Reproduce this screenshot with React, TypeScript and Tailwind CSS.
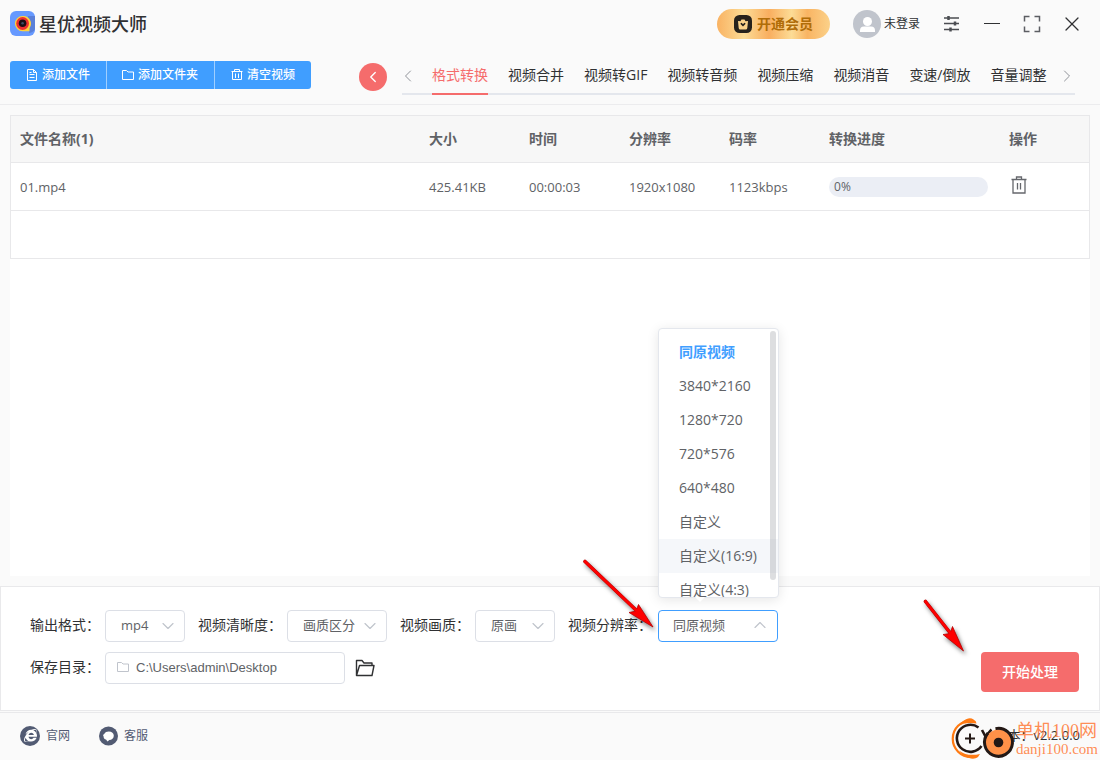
import React, { useState } from 'react';
import { ChevronDown, ChevronLeft, ChevronRight, ChevronUp, X } from 'lucide-react';
import { FaInternetExplorer } from 'react-icons/fa';

type VideoFile = {
  name: string;
  size: string;
  duration: string;
  resolution: string;
  bitrate: string;
  progress: number;
};

const TABS = ['格式转换', '视频合并', '视频转GIF', '视频转音频', '视频压缩', '视频消音', '变速/倒放', '音量调整'];

const RESOLUTIONS = ['同原视频', '3840*2160', '1280*720', '720*576', '640*480', '自定义', '自定义(16:9)', '自定义(4:3)'];

const FILES: VideoFile[] = [
  { name: '01.mp4', size: '425.41KB', duration: '00:00:03', resolution: '1920x1080', bitrate: '1123kbps', progress: 0 },
];

const AppLogo = () => (
  <svg width="25" height="25" viewBox="0 0 25 25" aria-hidden="true">
    <rect width="25" height="25" rx="6" fill="#6699ff" />
    <path d="M18 5h7v13q-1 3-6 4z" fill="#5a80d8" />
    <path d="M12.500 5a7.600 7.600 0 1 0 0 15.200h7V17A7.600 7.600 0 0 0 12.500 5z" fill="#ffd23c" />
    <circle cx="12.600" cy="12.500" r="6.400" fill="#ee2f2f" />
    <circle cx="12.600" cy="12.300" r="3.800" fill="#1c0d14" />
    <circle cx="12.600" cy="12.300" r="1.300" fill="#3c4d66" />
  </svg>
);

const VipIcon = () => (
  <svg width="18" height="18" viewBox="0 0 18 18" aria-hidden="true">
    <rect width="18" height="18" rx="5.500" fill="#26221c" />
    <path d="M4 6l2.500.3L7.500 4.500h3l1 1.800L14 6l-.7 7q-.1 1.500-1.500 1.500H6.200q-1.400 0-1.500-1.500z" fill="#fbd38a" />
    <path d="M7.300 8.700L9 10.300l1.700-1.600" fill="none" stroke="#26221c" strokeWidth="1.600" strokeLinecap="round" />
  </svg>
);

const Avatar = () => (
  <svg width="28" height="28" viewBox="0 0 28 28" aria-hidden="true">
    <circle cx="14" cy="14" r="14" fill="#c0c4cc" />
    <circle cx="14.500" cy="11.500" r="4.500" fill="#fff" />
    <path d="M7 22v-1.500a4 4 0 0 1 4-4h7a4 4 0 0 1 4 4v1.500z" fill="#fff" />
  </svg>
);

const SlidersIcon = () => (
  <svg width="18" height="18" viewBox="0 0 18 18" fill="none" stroke="#4b4d52" strokeWidth="1.500" aria-hidden="true">
    <path d="M1 3h15M1 8.500h15M1 14.500h15" />
    <path d="M5.500 1v4M12 6.500v4M7.500 12.500v4" strokeWidth="2.500" />
  </svg>
);

const FullscreenIcon = () => (
  <svg width="18" height="18" viewBox="0 0 18 18" fill="none" stroke="#5c5e63" strokeWidth="1.500" aria-hidden="true">
    <path d="M1.500 6.500v-5h5M11.500 1.500h5v5M16.500 11.500v5h-5M6.500 16.500h-5v-5" />
  </svg>
);

const DocIcon = () => (
  <svg width="12" height="12" viewBox="0 0 12 12" fill="none" stroke="currentColor" aria-hidden="true">
    <path d="M1.500.5h6l3 3v8h-9zM7.500.5v3h3M3.500 5.500h5M3.500 8.500h5M3.500 3.500h2" />
  </svg>
);

const FolderIcon = () => (
  <svg width="12" height="12" viewBox="0 0 12 12" fill="none" stroke="currentColor" aria-hidden="true">
    <path d="M.5 10.500v-9h4l1.500 1.500h5.500v7.500z" />
  </svg>
);

const ClearIcon = () => (
  <svg width="12" height="12" viewBox="0 0 12 12" fill="none" stroke="currentColor" aria-hidden="true">
    <path d="M.5 2.500h11M3.500 2.500v-2h5v2M1.500 2.500v8h9v-8M4.500 4.500v4.500M7.500 4.500v4.500" />
  </svg>
);

const TrashIcon = () => (
  <svg width="18" height="18" viewBox="0 0 18 18" fill="none" stroke="#65676c" strokeWidth="1.300" aria-hidden="true">
    <path d="M1.500 3.500h15M6.500 3.500V1h5v2.500M3 3.500v13.500h12V3.500M7.500 7v6.500M10.500 7v6.500" />
  </svg>
);

const OpenFolderIcon = () => (
  <svg width="20" height="18" viewBox="0 0 20 18" fill="none" stroke="#303133" strokeWidth="1.400" strokeLinejoin="round" aria-hidden="true">
    <path d="M1.500 16.500V1.500h5.500l2 2.500h8v2.500M1.500 16.500l3-10h14.500l-2 10z" />
  </svg>
);

const ChatIcon = () => (
  <svg width="20" height="20" viewBox="0 0 20 20" aria-hidden="true">
    <circle cx="10.500" cy="10" r="9.500" fill="#525b73" />
    <path d="M10.800 5.500c3 0 5 1.700 5 4.200s-2 4.200-4.500 4.300L9.500 15.500 8 13.500C6.500 13.500 5.500 12 5.600 10.500L5 9l1.200-1C7 6.300 8.700 5.500 10.800 5.500z" fill="#fff" />
  </svg>
);

const WatermarkLogo = () => (
  <svg width="65" height="44" viewBox="0 0 65 44" fill="none" aria-hidden="true">
    <path d="M20 3.500A18 18 0 0 0 20 40" stroke="#ff7a12" strokeWidth="2.200" />
    <path d="M7 9.500C11 3.500 18-1 22.500 2.500q3 1.500 3 4C19 5.500 12 5.500 7 9.500zM8 33.500c5 7 14 10.500 19 6.500l2-3C22 38.500 14 38.500 8 33.500z" fill="#ff7a12" />
    <path d="M27.500 10.500A13.500 13.500 0 1 0 30.500 29" stroke="#231815" strokeWidth="2.600" />
    <path d="M31 13l4.500 8.500M40.500 12.500q-4 3.500-6 9.500" stroke="#231815" strokeWidth="2.600" />
    <path d="M14 21.500h10M19 16.500v10" stroke="#231815" strokeWidth="2" />
    <circle cx="47.500" cy="25.500" r="13" fill="#ff9148" />
    <path d="M44.500 11.600A14 14 0 1 1 37 16" stroke="#231815" strokeWidth="3" />
    <circle cx="47.500" cy="25.500" r="4.800" fill="#231815" />
  </svg>
);

const ArrowLong = () => (
  <svg width="84" height="84" viewBox="0 0 84 84" className="pointer-events-none absolute -left-[81px] -top-[58px] z-20 drop-shadow-[2px_3px_2px_rgba(0,0,0,0.5)]" aria-hidden="true">
    <path d="M8 9.500L60 59" stroke="#b40000" strokeWidth="3.600" strokeLinecap="round" />
    <path d="M76 75L52 60.500l7-1.500 2.500-6.500z" fill="#fe0000" stroke="#b40000" strokeWidth=".8" />
    <path d="M8 9.500L61 60" stroke="#fe0000" strokeWidth="2.600" strokeLinecap="round" />
  </svg>
);

const ArrowShort = () => (
  <svg width="60" height="70" viewBox="0 0 60 70" className="pointer-events-none absolute -left-[64px] -top-[59px] drop-shadow-[2px_3px_2px_rgba(0,0,0,0.5)]" aria-hidden="true">
    <path d="M8.500 8.500L34 41" stroke="#b40000" strokeWidth="3.600" strokeLinecap="round" />
    <path d="M46.500 58L26 41.500l7-1 2.500-7z" fill="#fe0000" stroke="#b40000" strokeWidth=".8" />
    <path d="M8.500 8.500L35 42" stroke="#fe0000" strokeWidth="2.600" strokeLinecap="round" />
  </svg>
);

type SelectFieldProps = {
  id: string;
  label: string;
  options: string[];
  widthClass: string;
};

const SelectField: React.FC<SelectFieldProps> = ({ id, label, options, widthClass }) => (
  <div className="flex items-center gap-[5px]">
    <label htmlFor={id} className="pb-0.5 text-[#303133]">{label}</label>
    <div className={`relative ${widthClass}`}>
      <select id={id} className="h-8 w-full appearance-none rounded border border-[#dcdfe6] bg-white pb-0.5 pl-[15px] text-[13px] text-[#606266] outline-none">
        {options.map((o) => <option key={o}>{o}</option>)}
      </select>
      <ChevronDown size={20} strokeWidth={1.4} className="pointer-events-none absolute right-[7px] top-1.5 text-[#c0c4cc]" />
    </div>
  </div>
);

const ResolutionField = () => {
  const [open, setOpen] = useState(true);
  const [value, setValue] = useState(RESOLUTIONS[0]);
  const [hovered, setHovered] = useState('自定义(16:9)');

  return (
    <div className="flex items-center gap-1.5">
      <span id="resolution-label" className="pb-0.5 text-[#303133]">视频分辨率：</span>
      <div className="relative w-[120px]">
        <button
          type="button"
          role="combobox"
          aria-expanded={open}
          aria-controls="resolution-list"
          aria-labelledby="resolution-label"
          onClick={() => setOpen(!open)}
          className="flex h-8 w-full items-center justify-between rounded border border-[#409eff] bg-white pb-0.5 pl-3.5 pr-[7px] text-[13px] text-[#606266]"
        >
          {value}
          <ChevronUp size={20} strokeWidth={1.4} className="text-[#c0c4cc]" />
        </button>
        {open && (
          <div className="absolute bottom-full left-0 z-10 mb-3 w-[121px] rounded border border-[#e4e7ed] bg-white shadow-[0_2px_12px_rgba(0,0,0,0.1)]">
            <ul id="resolution-list" role="listbox" className="h-[268px] overflow-hidden pt-1.5">
              {RESOLUTIONS.map((r) => (
                <li
                  key={r}
                  role="option"
                  aria-selected={r === value}
                  onMouseEnter={() => setHovered(r)}
                  onClick={() => { setValue(r); setOpen(false); }}
                  className={`h-[34px] cursor-pointer whitespace-nowrap pl-5 leading-[34px] ${r === hovered ? 'bg-[#f5f7fa]' : ''} ${r === value ? 'font-bold text-[#409eff]' : 'text-[#606266]'}`}
                >
                  {r}
                </li>
              ))}
            </ul>
            <div className="absolute right-0.5 top-0.5 h-[249px] w-1.5 rounded-full bg-[#909399]/30" />
            <div className="absolute left-9 top-full h-0 w-0 border-x-[5px] border-t-[5px] border-x-transparent border-t-white" />
          </div>
        )}
        <ArrowLong />
      </div>
    </div>
  );
};

const Header = () => {
  const [active, setActive] = useState(TABS[0]);

  return (
    <header className="border-b border-[#ececee]">
      <div className="flex h-[47px] items-center justify-between pl-2.5 pr-5">
        <div className="flex items-center gap-1">
          <AppLogo />
          <h1 className="text-lg font-medium leading-6 text-[#303133]">星优视频大师</h1>
        </div>
        <div className="flex items-center gap-[23px]">
          <button type="button" className="flex h-[30px] items-center gap-[5px] rounded-full bg-[linear-gradient(90deg,#f9b262_0%,#fcdc96_24%,#f9ae5f_46%,#fcdc96_66%,#f9b463_80%,#fbd189_100%)] px-[17px] font-bold text-[#b06c08]">
            <VipIcon />
            开通会员
          </button>
          <button type="button" className="flex items-center gap-[3px] text-xs text-[#303133]">
            <Avatar />
            未登录
          </button>
          <button type="button" aria-label="设置"><SlidersIcon /></button>
          <button type="button" aria-label="最小化" className="flex h-4 w-4 items-center">
            <span className="h-px w-full bg-[#303133]" />
          </button>
          <button type="button" aria-label="最大化"><FullscreenIcon /></button>
          <button type="button" aria-label="关闭" className="flex w-4 justify-center">
            <X size={24} strokeWidth={1.3} className="shrink-0 text-[#303133]" />
          </button>
        </div>
      </div>

      <div className="flex items-center pb-[9px] pl-2.5 pr-[25px] pt-2">
        <div className="flex shrink-0 overflow-hidden rounded-[3px] bg-[#409eff] text-xs font-medium text-white">
          <button type="button" className="flex h-7 items-center gap-1 px-4"><DocIcon />添加文件</button>
          <button type="button" className="flex h-7 items-center gap-1 border-l border-[#a0cfff] px-4 pl-[15px]"><FolderIcon />添加文件夹</button>
          <button type="button" className="flex h-7 items-center gap-1 border-l border-[#a0cfff] px-4"><ClearIcon />清空视频</button>
        </div>
        <button type="button" aria-label="返回" className="ml-12 mt-1 flex h-7 w-7 shrink-0 items-center justify-center rounded-full bg-[#f56c6c] text-white">
          <ChevronLeft size={18} strokeWidth={1.8} />
        </button>
        <nav className="ml-[15px] flex h-10 min-w-0 flex-1 items-stretch border-b-2 border-[#e4e7ed]">
          <button type="button" aria-label="上一个" className="mt-1 w-[30px] shrink-0 text-[#909399]">
            <ChevronLeft size={20} strokeWidth={1.2} className="-ml-1" />
          </button>
          <div className="flex flex-1 gap-5">
            {TABS.map((t) => (
              <button
                key={t}
                type="button"
                onClick={() => setActive(t)}
                className={`-mb-0.5 shrink-0 whitespace-nowrap border-b-2 pt-0.5 ${t === active ? 'border-[#f56c6c] text-[#f56c6c]' : 'border-transparent text-[#303133]'}`}
              >
                {t}
              </button>
            ))}
          </div>
          <button type="button" aria-label="下一个" className="mt-1 flex w-4 shrink-0 items-center justify-center text-[#909399]">
            <ChevronRight size={20} strokeWidth={1.2} className="shrink-0" />
          </button>
        </nav>
      </div>
    </header>
  );
};

const FileTable = () => (
  <table className="w-full table-fixed border-separate border-spacing-0 border-x border-t border-[#e8e8ea] text-left text-[13px] text-[#606266] [&_td]:h-12 [&_td]:border-b [&_td]:border-[#e8e8ea] [&_td]:px-[9px] [&_td]:pt-px [&_td]:pb-0 [&_th]:h-[47px] [&_th]:border-b [&_th]:border-[#e8e8ea] [&_th]:px-[9px]">
    <thead className="bg-[#f7f7f7] text-sm">
      <tr>
        <th>文件名称(1)</th>
        <th className="w-[100px]">大小</th>
        <th className="w-[100px]">时间</th>
        <th className="w-[100px]">分辨率</th>
        <th className="w-[100px]">码率</th>
        <th className="w-[180px]">转换进度</th>
        <th className="w-[89px]">操作</th>
      </tr>
    </thead>
    <tbody>
      {FILES.map((f) => (
        <tr key={f.name}>
          <td>{f.name}</td>
          <td>{f.size}</td>
          <td>{f.duration}</td>
          <td>{f.resolution}</td>
          <td>{f.bitrate}</td>
          <td>
            <div role="progressbar" aria-valuenow={f.progress} className="relative h-5 w-[159px] overflow-hidden rounded-full bg-[#ebeef5]">
              <div className="absolute inset-y-0 left-0 bg-[#409eff]" style={{ width: `${f.progress}%` }} />
              <span className="relative block pl-[5px] text-xs leading-5">{f.progress}%</span>
            </div>
          </td>
          <td>
            <button type="button" aria-label="删除" className="mb-1 block pl-px"><TrashIcon /></button>
          </td>
        </tr>
      ))}
      <tr><td colSpan={7} /></tr>
    </tbody>
  </table>
);

const SettingsPanel = () => (
  <section className="mt-2.5 border border-[#e9e9eb] bg-white pb-[18px] pl-[29px] pr-5 pt-[23px]">
    <div className="flex items-center gap-[13px]">
      <SelectField id="format" label="输出格式：" options={['mp4']} widthClass="w-20" />
      <SelectField id="clarity" label="视频清晰度：" options={['画质区分']} widthClass="w-[100px]" />
      <SelectField id="quality" label="视频画质：" options={['原画']} widthClass="w-20" />
      <ResolutionField />
    </div>
    <div className="mt-2.5 flex items-start justify-between">
      <div className="flex items-center">
        <label htmlFor="save-dir" className="mr-[5px] pb-0.5 text-[#303133]">保存目录：</label>
        <div className="relative text-[#c0c4cc]">
          <input
            id="save-dir"
            type="text"
            defaultValue="C:\Users\admin\Desktop"
            className="h-8 w-60 rounded border border-[#dcdfe6] bg-white pb-0.5 pl-[30px] pr-3 font-['Liberation_Sans',sans-serif] text-[13px] text-[#606266] outline-none"
          />
          <span className="pointer-events-none absolute left-3 top-[9px]"><FolderIcon /></span>
        </div>
        <button type="button" aria-label="打开目录" className="ml-2.5"><OpenFolderIcon /></button>
      </div>
      <div className="relative">
        <button type="button" className="h-10 rounded bg-[#f56c6c] px-[21px] font-medium text-white">开始处理</button>
        <ArrowShort />
      </div>
    </div>
  </section>
);

const Footer = () => (
  <footer className="relative mt-px flex h-12 items-center justify-between border-t border-[#e9e9eb] px-5 pb-0.5">
    <div className="flex items-center gap-7 text-xs text-[#525b73]">
      <a href="#site" className="flex items-center gap-1.5">
        <span className="flex h-5 w-5 items-center justify-center rounded-full bg-[#525b73] text-white"><FaInternetExplorer size={13} /></span>
        官网
      </a>
      <a href="#support" className="flex items-center gap-1.5">
        <ChatIcon />
        客服
      </a>
    </div>
    <span className="text-[13px] text-[#303133]">版本：v2.2.0.0</span>
    <div className="absolute right-0.5 top-1 flex items-center">
      <WatermarkLogo />
      <div className="whitespace-nowrap font-['Liberation_Serif','Noto_Sans_CJK_SC',serif] text-[#ff7f3f]/90">
        <div className="text-lg leading-5">单机100网</div>
        <div className="text-[15px] leading-4">danji100.com</div>
      </div>
    </div>
  </footer>
);

const App: React.FC = () => (
  <div className="flex min-h-screen flex-col bg-[#fafafa] font-['Open_Sans','Noto_Sans_CJK_SC',sans-serif] text-sm">
    <Header />
    <main className="mx-2.5 mt-2.5 flex-1 bg-white">
      <FileTable />
    </main>
    <SettingsPanel />
    <Footer />
  </div>
);

export default App;
